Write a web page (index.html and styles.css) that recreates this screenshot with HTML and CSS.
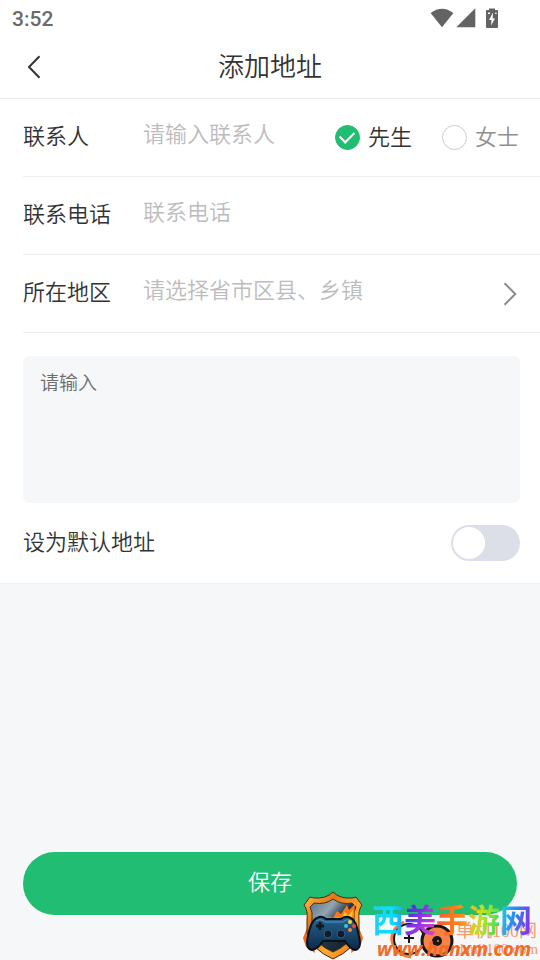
FILE: index.html
```html
<!DOCTYPE html>
<html lang="zh-CN">
<head>
<meta charset="utf-8">
<meta name="viewport" content="width=device-width, initial-scale=1">
<title>添加地址</title>
<link rel="stylesheet" href="styles.css">
</head>
<body>
<div class="status">
  <time>3:52</time>
  <div class="status-icons">
    <svg width="24" height="20" viewBox="0 0 24 20" aria-hidden="true"><path d="M0.6 5Q12-3.6 23.4 5L12 19.2Z"/></svg>
    <svg width="20" height="20" viewBox="0 0 20 20" aria-hidden="true"><path d="M19.3 0.3V19.3H0.3Z"/></svg>
    <svg class="battery" width="12" height="20" viewBox="0 0 12 20" aria-hidden="true"><path d="M3 2V0.5H9V2H11Q12 2 12 3V19Q12 20 11 20H1Q0 20 0 19V3Q0 2 1 2Z"/><path class="bolt" d="M7 4.5 3 12H5.5L5 17.5 9 10.5H6.7ZM2 4.5H4V6H2ZM9.2 4.5H10.5V6H9.2Z"/></svg>
  </div>
</div>
<header class="nav">
  <button class="back" aria-label="返回"><svg width="14" height="24" viewBox="0 0 14 24"><path d="M12.5 1.2 2 12 12.5 22.8"/></svg></button>
  <h1>添加地址</h1>
</header>
<form class="page">
  <div class="panel">
    <div class="row">
      <label class="name" for="contact">联系人</label>
      <input class="field" id="contact" type="text" placeholder="请输入联系人">
      <div class="genders">
        <label class="gender"><input type="radio" name="gender" checked><span>先生</span></label>
        <label class="gender"><input type="radio" name="gender"><span>女士</span></label>
      </div>
    </div>
    <div class="row">
      <label class="name" for="phone">联系电话</label>
      <input class="field" id="phone" type="tel" placeholder="联系电话">
    </div>
    <div class="row">
      <label class="name" for="region">所在地区</label>
      <input class="field" id="region" type="text" placeholder="请选择省市区县、乡镇" readonly>
      <button class="more" type="button" aria-label="选择地区"><svg width="16" height="24" viewBox="0 0 16 24"><path d="M1.5 1.2 12.3 12 1.5 22.8"/></svg></button>
    </div>
    <textarea class="detail" placeholder="请输入" aria-label="详细地址"></textarea>
    <div class="default">
      <label for="default">设为默认地址</label>
      <input class="switch" id="default" type="checkbox" role="switch">
    </div>
  </div>
  <button class="save" type="button">保存</button>
</form>

<div class="site-mark">
  <svg class="mascot" width="66" height="38" viewBox="0 0 66 38" aria-hidden="true">
    <path fill="none" stroke="#f47b31" stroke-width="3" d="M14 1Q0 8 2 20Q5 34 21 36"/>
    <circle cx="19" cy="18" r="15" fill="#f5f6f8" stroke="#171717" stroke-width="2"/>
    <path stroke="#171717" stroke-width="2" d="M19 12V22M14 17H24"/>
    <circle cx="47" cy="20" r="15" fill="#f78347" stroke="#171717" stroke-width="3"/>
    <circle cx="47" cy="20" r="5" fill="#171717"/><circle cx="48" cy="20" r="1" fill="#f78347"/>
  </svg>
  <svg class="shield" width="62" height="70" viewBox="0 0 62 70" aria-hidden="true">
    <defs>
      <linearGradient id="rim" x1="0" y1="0" x2="1" y2="1"><stop offset="0" stop-color="#ffc34a"/><stop offset=".3" stop-color="#e07818"/><stop offset=".65" stop-color="#ffab30"/><stop offset="1" stop-color="#e25a08"/></linearGradient>
      <linearGradient id="steel" x1="0" y1="0" x2="1" y2="1"><stop offset="0" stop-color="#5c7080"/><stop offset=".3" stop-color="#93a5b1"/><stop offset=".5" stop-color="#243848"/><stop offset="1" stop-color="#0b1722"/></linearGradient>
      <linearGradient id="pad" x1="0" y1="0" x2="0" y2="1"><stop offset="0" stop-color="#28638f"/><stop offset="1" stop-color="#0b2948"/></linearGradient>
    </defs>
    <path fill="#f26a12" d="M5 38 1 48 4 57 13 63 11 50ZM57 38 61 48 58 57 49 63 51 50Z"/>
    <path fill="url(#rim)" stroke="#57240d" d="M31 2Q38 9 50 8L54 7 60 15Q56 20 57 30V43Q53 59 31 69Q9 59 5 43V30Q6 20 2 15L8 7 12 8Q24 9 31 2Z"/>
    <path fill="url(#steel)" stroke="#4f2b10" d="M31 9Q39 15 50 13L54 17Q51 22 52 30V43Q47 55 31 62Q15 55 10 43V30Q11 22 8 17L12 13Q23 15 31 9Z"/>
    <path fill="#ff7615" d="M18 33Q24 24 31 28L35 21 39 24 45 15 47 20 53 14 51 39H20Z"/>
    <path fill="#ffd13b" d="M28 32Q34 25 39 29L43 22 46 26 51 20 49 36 30 36Z"/>
    <path fill="url(#pad)" stroke="#07111d" stroke-width="2" d="M15 28Q20 25 24 29H39Q43 25 49 28Q54 30 57 46Q60 59 53 60Q48 59 43 51H21Q16 59 10 60Q3 59 6 46Q9 30 15 28Z"/>
    <path fill="none" stroke="#4d9bc4" d="M14 31Q19 28 23 32H41Q45 28 50 31"/>
    <path stroke="#101820" stroke-width="3" d="M18 32V40M14 36H22"/>
    <g fill="#101c2b" stroke="#315f80"><circle cx="26" cy="44" r="4"/><circle cx="39" cy="44" r="4"/></g>
    <circle cx="48" cy="32" r="2" fill="#f8cf37"/><circle cx="44" cy="36" r="2" fill="#40c5ce"/><circle cx="52" cy="36" r="2" fill="#f04d36"/><circle cx="48" cy="40" r="2" fill="#f08b2c"/>
  </svg>
  <div class="danji"><b>单机100网</b><span>danji100.com</span></div>
  <strong class="brand"><span class="c1">西</span><span class="c2">美</span><span class="c3">手</span><span class="c4">游</span><span class="c5">网</span></strong>
  <em class="url">www.hanxm.com</em>
</div>
</body>
</html>
```
FILE: styles.css
```css
* { box-sizing: border-box; }

body {
  margin: 0;
  min-height: 100vh;
  display: flex;
  flex-direction: column;
  position: relative;
  background: #f5f7f9;
  color: #333;
  font: 350 22px/32px "Noto Sans CJK SC", sans-serif;
}

button, input, textarea {
  margin: 0;
  padding: 0;
  border: 0;
  background: none;
  color: inherit;
  font: inherit;
}

.status {
  display: flex;
  justify-content: space-between;
  align-items: center;
  height: 36px;
  padding: 0 42px 0 12px;
  background: #fff;
  color: #6a6a6a;
  font: 500 21px/36px Roboto, sans-serif;
}
.status time { padding-top: 2px; }
.status-icons { display: flex; gap: 2px; fill: #636363; }
.battery { margin-left: 8px; }
.bolt { fill: #fff; }

.nav {
  display: grid;
  grid-template-columns: 68px 1fr 68px;
  align-items: center;
  height: 63px;
  background: #fff;
  border-bottom: 1px solid #ebebeb;
}
.back { display: flex; justify-content: center; }
.back svg, .more svg { fill: none; stroke: #333; stroke-width: 2; }
h1 { margin: 0; padding-bottom: 4px; text-align: center; font-size: 26px; font-weight: inherit; }

.page { flex: 1; display: flex; flex-direction: column; }
.panel { padding-left: 23px; background: #fff; border-bottom: 1px solid #eff0f2; }

.row {
  display: flex;
  align-items: center;
  height: 78px;
  padding-right: 21px;
  border-bottom: 1px solid #ededed;
}
.name { width: 120px; padding-bottom: 8px; }
.field { flex: 1; min-width: 0; height: 44px; padding-bottom: 12px; outline: 0; }
.field::placeholder { color: #bcbcbc; opacity: 1; }

.genders { display: flex; gap: 30px; }
.gender { display: flex; align-items: center; gap: 8px; color: #909090; }
.gender:has(:checked) { color: #333; }
.gender span { padding-bottom: 6px; }
.gender input {
  appearance: none;
  display: grid;
  place-items: center;
  width: 25px;
  height: 25px;
  border: 1px solid #ccc;
  border-radius: 50%;
}
.gender input:checked { border-color: #21bd73; background: #21bd73; }
.gender input:checked::after {
  content: "";
  width: 12px;
  height: 7px;
  margin-bottom: 4px;
  border: solid #fff;
  border-width: 0 0 2px 2px;
  transform: rotate(-45deg);
}

.more { display: flex; }
.more svg { stroke: #8a8a8a; }

.detail {
  display: block;
  width: calc(100% - 20px);
  height: 147px;
  margin-top: 23px;
  padding: 12px 17px;
  border-radius: 6px;
  background: #f5f7f9;
  font-size: 19px;
  line-height: 28px;
  resize: none;
  outline: 0;
}
.detail::placeholder { color: #6c6c6c; opacity: 1; }

.default {
  display: flex;
  justify-content: space-between;
  align-items: center;
  height: 80px;
  padding-right: 20px;
}
.default label { padding-bottom: 6px; }
.switch {
  appearance: none;
  width: 69px;
  height: 36px;
  padding: 2px;
  border-radius: 18px;
  background: #dcdfe8;
}
.switch::after {
  content: "";
  display: block;
  width: 32px;
  height: 32px;
  border-radius: 50%;
  background: #fff;
}
.switch:checked { background: #21bd73; }
.switch:checked::after { margin-left: auto; }

.save {
  height: 63px;
  margin: auto 23px 45px;
  padding-bottom: 8px;
  border-radius: 32px;
  background: #21bd73;
  color: #fff;
}

.site-mark {
  position: absolute;
  right: 0;
  bottom: 0;
  width: 238px;
  height: 70px;
  pointer-events: none;
}
.site-mark > * { position: absolute; }
.shield { left: 0; top: 0; }
.mascot { left: 88px; top: 31px; }
.danji {
  left: 154px;
  top: 32px;
  display: flex;
  flex-direction: column;
  color: #f29a70;
  font: 400 15px/18px "Liberation Serif", "Noto Sans CJK SC", serif;
}
.danji b { font-size: 18px; font-weight: 400; }
.brand { left: 70px; top: 6px; display: flex; font-size: 32px; line-height: 44px; font-weight: 700; }
.brand span { color: transparent; background-clip: text; -webkit-background-clip: text; }
.brand .c1 { background-image: linear-gradient(90deg, #21cdf4, #08dfff 60%, #2a9df4); }
.brand .c2 { background-image: linear-gradient(120deg, #5633dd 30%, #a536e5 60%, #e64bb0); }
.brand .c3 { background-image: linear-gradient(90deg, #f35a47, #ff7718 50%, #ff9c18); }
.brand .c4 { background-image: linear-gradient(100deg, #ffad14, #bfe320 45%, #28dc68); }
.brand .c5 { background-image: linear-gradient(100deg, #1adce5, #298af5 45%, #8135ed 85%); }
.url { left: 75px; top: 48px; color: #f36b24; font: italic 700 19px/22px "Noto Sans", sans-serif; }
```
